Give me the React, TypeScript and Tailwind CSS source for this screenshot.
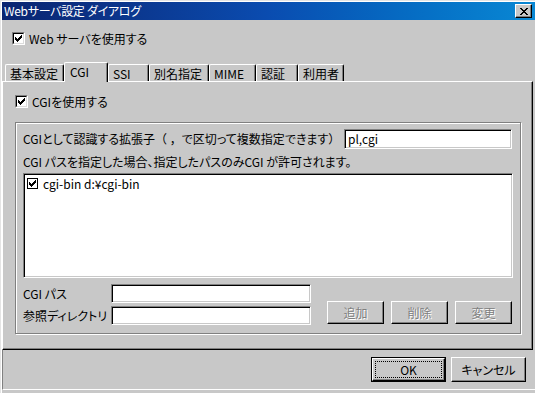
import React from 'react';

// classic 7x7 check glyph
const CheckMark = () => (
  <svg width="7" height="7" viewBox="0 0 7 7" shapeRendering="crispEdges" fill="#000">
    <rect x="6" y="0" width="1" height="1" />
    <rect x="5" y="1" width="2" height="1" />
    <rect x="0" y="2" width="1" height="1" />
    <rect x="4" y="2" width="3" height="1" />
    <rect x="0" y="3" width="2" height="1" />
    <rect x="3" y="3" width="3" height="1" />
    <rect x="0" y="4" width="5" height="1" />
    <rect x="1" y="5" width="3" height="1" />
    <rect x="2" y="6" width="1" height="1" />
  </svg>
);

const CloseGlyph = () => (
  <svg width="8" height="7" viewBox="0 0 8 7" shapeRendering="crispEdges" fill="#000">
    <rect x="0" y="0" width="2" height="1" />
    <rect x="6" y="0" width="2" height="1" />
    <rect x="1" y="1" width="2" height="1" />
    <rect x="5" y="1" width="2" height="1" />
    <rect x="2" y="2" width="4" height="1" />
    <rect x="3" y="3" width="2" height="1" />
    <rect x="2" y="4" width="4" height="1" />
    <rect x="1" y="5" width="2" height="1" />
    <rect x="5" y="5" width="2" height="1" />
    <rect x="0" y="6" width="2" height="1" />
    <rect x="6" y="6" width="2" height="1" />
  </svg>
);

const CheckBox = ({ label }: { label: string }) => (
  <div className="flex items-center h-[13px] gap-[4px]">
    <div className="w-[13px] h-[13px] border border-t-[#808080] border-l-[#808080] border-r-white border-b-white">
      <div className="w-full h-full bg-white border border-t-[#000] border-l-[#000] border-r-[#dcdcdc] border-b-[#dcdcdc] flex items-center justify-center">
        <CheckMark />
      </div>
    </div>
    <span>{label}</span>
  </div>
);

const Field = ({ w, h, value }: { w: string; h: string; value?: string }) => (
  <div className={`${w} ${h} bg-white border border-t-[#808080] border-l-[#808080] border-r-white border-b-white shadow-[inset_1px_1px_0_#000,inset_-1px_-1px_0_#c8c8c8] flex items-center pl-[3px]`}>
    {value}
  </div>
);

const DisabledButton = ({ label }: { label: string }) => (
  <div className="w-[57px] h-[23px] border border-t-white border-l-white border-r-black border-b-black shadow-[inset_-1px_-1px_0_#808080] flex items-center justify-center text-[#808080] [text-shadow:1px_1px_0_#ffffff]">
    {label}
  </div>
);

const tabs = [
  { label: '基本設定', w: 'w-[59px]' },
  { label: 'CGI', w: 'w-[44px]', active: true },
  { label: 'SSI', w: 'w-[41px]' },
  { label: '別名指定', w: 'w-[60px]' },
  { label: 'MIME', w: 'w-[47px]' },
  { label: '認証', w: 'w-[42px]' },
  { label: '利用者', w: 'w-[46px]' },
];

export default function App() {
  return (
    <div className="w-[535px] h-[393px] bg-[#c8c8c8] overflow-hidden flex flex-col pl-[2px] pt-[2px] text-[12px] leading-none text-black font-['Noto_Sans_CJK_JP','Noto_Sans_CJK_SC',sans-serif] [font-feature-settings:'palt'] shadow-[inset_1px_1px_0_#e4e4e4,inset_2px_2px_0_#ffffff]">
      {/* title bar */}
      <div className="h-[18px] flex items-center bg-linear-to-r from-[#0a2470] via-[#0a4cb0] to-[#0a88d4] text-white pl-[2px]">
        <span className="tracking-[-0.3px]">Webサーバ設定 ダイアログ</span>
        <div className="ml-auto mr-[3px] w-[17px] h-[14px] bg-[#c8c8c8] border border-t-white border-l-white border-r-black border-b-black shadow-[inset_-1px_-1px_0_#808080] flex items-center justify-center">
          <CloseGlyph />
        </div>
      </div>

      <div className="mt-[12px] pl-[10px]">
        <CheckBox label="Web サーバを使用する" />
      </div>

      {/* tab strip */}
      <div className="mt-[17px] h-[19px] flex items-end pl-[3px]">
        {tabs.map((t) =>
          t.active ? (
            <div
              key={t.label}
              className={`${t.w} h-[20px] -mb-[1px] relative z-10 bg-[#c8c8c8] border-t border-l border-t-white border-l-white border-r border-r-black shadow-[inset_-1px_0_0_#808080] rounded-t-[2px] pl-[5px] pt-[3px]`}
            >
              {t.label}
            </div>
          ) : (
            <div
              key={t.label}
              className={`${t.w} h-[17px] bg-[#c8c8c8] border-t border-l border-t-white border-l-white border-r border-r-black shadow-[inset_-1px_0_0_#808080] rounded-t-[2px] pl-[4px] pt-[3px]`}
            >
              {t.label}
            </div>
          )
        )}
      </div>

      {/* tab panel */}
      <div className="w-[531px] h-[269px] border border-t-white border-l-white border-r-black border-b-black shadow-[inset_-1px_-1px_0_#808080] flex flex-col">
        <div className="mt-[13px] pl-[12px]">
          <CheckBox label="CGIを使用する" />
        </div>

        <div className="mt-[14px] ml-[12px] w-[506px] h-[212px] border border-[#808080] shadow-[inset_1px_1px_0_#ffffff,1px_1px_0_#ffffff] flex flex-col pl-[7px]">
          <div className="mt-[6px] h-[20px] flex items-center">
            <span>
              CGIとして認識する拡張子<span className="[font-feature-settings:normal]">（ ，</span>で区切って複数指定できます<span className="[font-feature-settings:normal]">）</span>
            </span>
            <div className="ml-auto mr-[8px]">
              <Field w="w-[168px]" h="h-[20px]" value="pl,cgi" />
            </div>
          </div>

          <div className="mt-[6px] h-[14px] flex items-center">
            CGI パスを指定した場合、指定したパスのみCGI が許可されます。
          </div>

          <div className="mt-[4px] w-[490px] h-[105px] bg-white border border-t-[#808080] border-l-[#808080] border-r-white border-b-white shadow-[inset_1px_1px_0_#000,inset_-1px_-1px_0_#c8c8c8] pt-[3px] pl-[3px]">
            <div className="flex items-center h-[13px] gap-[5px]">
              <div className="w-[11px] h-[11px] border border-black bg-white flex items-center justify-center">
                <CheckMark />
              </div>
              <span>cgi-bin d:¥cgi-bin</span>
            </div>
          </div>

          <div className="mt-[6px] flex">
            <div className="flex flex-col gap-[3px]">
              <div className="flex items-center">
                <span className="w-[88px]">CGI パス</span>
                <Field w="w-[200px]" h="h-[19px]" />
              </div>
              <div className="flex items-center">
                <span className="w-[88px]">参照ディレクトリ</span>
                <Field w="w-[200px]" h="h-[19px]" />
              </div>
            </div>
            <div className="ml-[16px] self-end mb-[1px] flex gap-[7px]">
              <DisabledButton label="追加" />
              <DisabledButton label="削除" />
              <DisabledButton label="変更" />
            </div>
          </div>
        </div>
      </div>

      {/* footer */}
      <div className="h-[40px] border-l border-l-[#808080] border-b border-b-white flex justify-end items-start pt-[7px] pr-[9px] gap-[5px]">
        <div className="w-[75px] h-[25px] border border-black">
          <div className="w-full h-full border border-t-white border-l-white border-r-black border-b-black shadow-[inset_-1px_-1px_0_#808080] p-[2px]">
            <div className="w-full h-full border border-dotted border-black flex items-center justify-center">
              OK
            </div>
          </div>
        </div>
        <div className="w-[75px] h-[25px] border border-t-white border-l-white border-r-black border-b-black shadow-[inset_-1px_-1px_0_#808080] flex items-center justify-center">
          キャンセル
        </div>
      </div>
    </div>
  );
}
